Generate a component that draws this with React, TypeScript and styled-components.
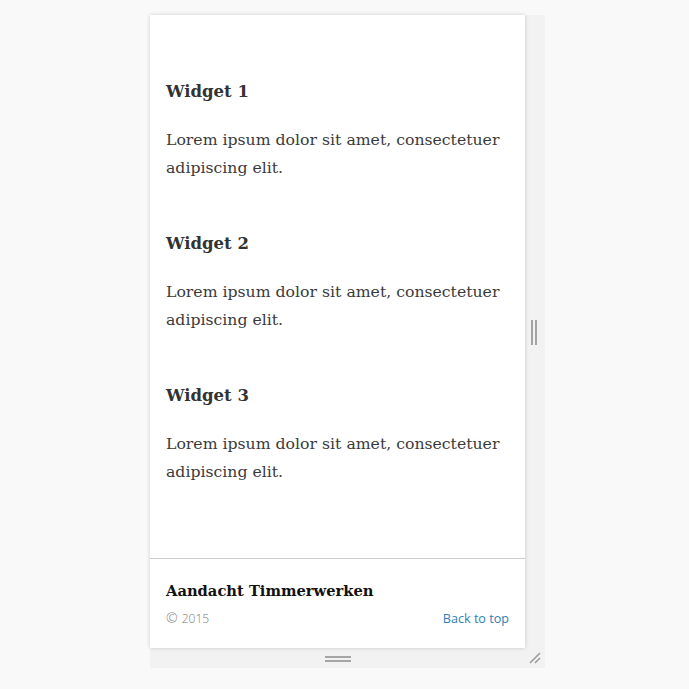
import styled, { createGlobalStyle } from "styled-components";

const GlobalStyle = createGlobalStyle`
  html, body {
    margin: 0;
    padding: 0;
    background: #f9f9f9;
  }
`;

const Page = styled.div`
  padding: 15px 0 0 150px;
`;

const Frame = styled.div`
  position: relative;
  width: 395px;
  height: 653px;
  background: #f2f2f2;
  box-sizing: border-box;
  padding: 0 20px 20px 0;
`;

const Card = styled.div`
  box-sizing: border-box;
  height: 100%;
  background: #fff;
  box-shadow: 0 0 4px rgba(0, 0, 0, 0.18);
  display: flex;
  flex-direction: column;
`;

const Widgets = styled.div`
  flex: 1;
  padding: 63px 16px 0;
  display: flex;
  flex-direction: column;
  gap: 48px;
`;

const Widget = styled.section`
  display: flex;
  flex-direction: column;
  gap: 20px;
`;

const WidgetTitle = styled.h2`
  margin: 0;
  font-family: "DejaVu Serif", "Liberation Serif", serif;
  font-weight: 700;
  font-size: 16.5px;
  line-height: 28px;
  color: #333;
`;

const WidgetText = styled.p`
  margin: 0;
  font-family: "DejaVu Serif", "Liberation Serif", serif;
  font-size: 15.7px;
  line-height: 28px;
  color: #3a3a3a;
`;

const Footer = styled.footer`
  flex: none;
  box-sizing: border-box;
  height: 90px;
  border-top: 1px solid #cccccc;
  padding: 20px 16px 0;
  display: flex;
  flex-direction: column;
  gap: 7px;
`;

const SiteTitle = styled.div`
  font-family: "DejaVu Serif", "Liberation Serif", serif;
  font-weight: 700;
  font-size: 14.7px;
  line-height: 24px;
  height: 24px;
  color: #111;
`;

const FooterRow = styled.div`
  display: flex;
  justify-content: space-between;
  align-items: center;
  height: 18px;
  font-family: "Open Sans", "Noto Sans", sans-serif;
  line-height: 18px;
`;

const Copyright = styled.span`
  font-size: 12px;
  color: #7a7a7a;
  font-weight: 300;
`;

const CopySign = styled.span`
  font-size: 14px;
  line-height: 0;
  margin-right: 1px;
`;

const BackLink = styled.a`
  font-size: 12.6px;
  color: #2e7fb8;
  text-decoration: none;
`;

const Grip = styled.div<{ vertical?: boolean }>`
  position: absolute;
  box-sizing: border-box;
  ${(p) =>
    p.vertical
      ? `right: 8px; top: 305px; width: 6px; height: 25px;
         border-left: 2px solid #a5a5a5; border-right: 2px solid #a5a5a5;`
      : `bottom: 6px; left: 175px; width: 26px; height: 6px;
         border-top: 2px solid #a5a5a5; border-bottom: 2px solid #a5a5a5;`}
`;

const Corner = styled.svg`
  position: absolute;
  right: 3px;
  bottom: 3px;
`;

const widgets = ["Widget 1", "Widget 2", "Widget 3"];

export default function App() {
  return (
    <>
      <GlobalStyle />
      <Page>
        <Frame>
          <Card>
            <Widgets>
              {widgets.map((w) => (
                <Widget key={w}>
                  <WidgetTitle>{w}</WidgetTitle>
                  <WidgetText>
                    Lorem ipsum dolor sit amet, consectetuer adipiscing elit.
                  </WidgetText>
                </Widget>
              ))}
            </Widgets>
            <Footer>
              <SiteTitle>Aandacht Timmerwerken</SiteTitle>
              <FooterRow>
                <Copyright>
                  <CopySign>©</CopySign> 2015
                </Copyright>
                <BackLink href="#">Back to top</BackLink>
              </FooterRow>
            </Footer>
          </Card>
          <Grip vertical />
          <Grip />
          <Corner width="14" height="14" viewBox="0 0 14 14">
            <path d="M2 12 L12 2 M7 12 L12 7" stroke="#999" strokeWidth="1.5" />
          </Corner>
        </Frame>
      </Page>
    </>
  );
}
